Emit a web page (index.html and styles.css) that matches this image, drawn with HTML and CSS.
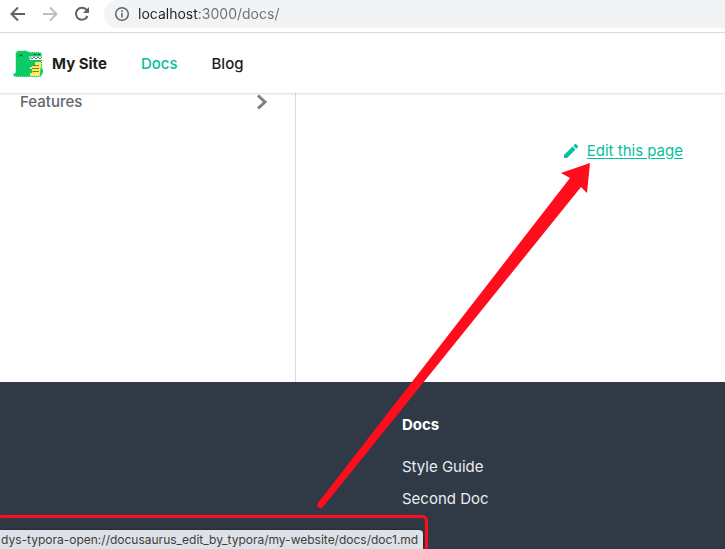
FILE: index.html
```html
<!DOCTYPE html>
<html lang="en">
<head>
<meta charset="utf-8">
<meta name="viewport" content="width=device-width, initial-scale=1">
<title>My Site</title>
<link rel="stylesheet" href="styles.css">
</head>
<body>
<div class="browser">
  <div class="toolbar">
    <button class="tool" type="button" aria-label="Back">
      <svg width="16" height="16" viewBox="0 0 16 16"><path d="M15 8H2M8 1.500L1.500 8L8 14.500"/></svg>
    </button>
    <button class="tool" type="button" aria-label="Forward" disabled>
      <svg width="16" height="16" viewBox="0 0 16 16"><path d="M1 8H14M8 1.500L14.500 8L8 14.500"/></svg>
    </button>
    <button class="tool" type="button" aria-label="Reload">
      <svg width="16" height="16" viewBox="0 0 16 16"><path d="M13.500 10A6 6 0 1 1 12.500 3.800L13.500 5"/><path class="solid" d="M15 1V7H9Z"/></svg>
    </button>
    <div class="address">
      <svg width="16" height="16" viewBox="0 0 16 16" aria-hidden="true"><circle cx="8" cy="8" r="6.300"/><path d="M8 7V11.500M8 4.300V6"/></svg>
      <input class="url" type="text" aria-label="Address" value="localhost:3000/docs/">
    </div>
  </div>

  <header class="navbar">
    <a class="brand" href="#">
      <svg class="logo" width="32" height="32" viewBox="0 0 32 32" aria-hidden="true">
        <path fill="#0ccb66" stroke="#0ccb66" stroke-dasharray="1 1" d="M4 6Q4 3 7 3H14Q17 4 18 4.500H27Q29.500 4.500 29.500 7V26Q29.500 28.500 27 28.500H4Q1.500 28.500 1.500 26Q4 26 4 23Z"/>
        <path fill="#fff" d="M17 8.500H31V12H18Z"/>
        <path fill="none" stroke="#444" stroke-width=".8" d="M18 9L20 11L22 9L24 11L26 9L28 11L30 9"/>
        <path fill="#ffee5a" d="M23 14H29V25Q29 28 26 28H18V24H20V21H18V18H23Z"/>
        <path fill="none" stroke="#655d2f" stroke-width=".8" d="M21 17.500H27M20 20.500H27M21 23.500H27"/>
        <path fill="none" stroke="#174a2c" d="M7 8.500Q9 5 11 8.500M22 6.500H24M26 6.500H28"/>
        <path fill="#0ccb66" d="M16 16H20Q21.500 17.500 20 19H16ZM16 22H20Q21.500 23.500 20 25H16ZM28.500 19.500Q31 20 31 23Q31 27 28 28Z"/>
      </svg>
      <b>My Site</b>
    </a>
    <nav class="links">
      <a class="active" href="#">Docs</a>
      <a href="#">Blog</a>
    </nav>
  </header>

  <div class="main">
    <aside class="sidebar">
      <a class="category" href="#">Features
        <svg width="12" height="16" viewBox="0 0 12 16" aria-hidden="true"><path d="M2 1.500L9 8L2 14.500"/></svg>
      </a>
    </aside>
    <main class="content">
      <a class="edit" href="#">
        <svg width="16" height="16" viewBox="0 0 16 16" aria-hidden="true"><path d="M1 12L9.500 3.500L12.500 6.500L4 15H1ZM10.300 2.700L11.800 1.200Q12.500 .5 13.200 1.200L14.800 2.800Q15.500 3.500 14.800 4.200L13.300 5.700Z"/></svg>
        <span>Edit this page</span>
      </a>
    </main>
  </div>

  <footer class="footer">
    <div class="column">
      <h2>Docs</h2>
      <ul>
        <li><a href="#">Style Guide</a></li>
        <li><a href="#">Second Doc</a></li>
      </ul>
    </div>
  </footer>

  <div class="status">dys-typora-open://docusaurus_edit_by_typora/my-website/docs/doc1.md</div>
  <div class="highlight"></div>
  <svg class="arrow" width="276" height="348" viewBox="0 0 276 348" aria-hidden="true"><path d="M273 2L244 12L253 17L1 342A3 3 0 0 0 6 346L264 26L270 32Z"/></svg>
</div>
</body>
</html>
```
FILE: styles.css
```css
* { box-sizing: border-box; }

body {
  margin: 0;
  font: 15px/24px Inter, "Liberation Sans", sans-serif;
  color: #1c1e21;
  background: #fff;
}

a { color: inherit; text-decoration: none; }

.browser {
  position: relative;
  display: flex;
  flex-direction: column;
  height: 100vh;
  overflow: hidden;
}

.toolbar {
  display: flex;
  align-items: flex-start;
  gap: 16px;
  padding-left: 10px;
  height: 33px;
  flex: none;
  border-bottom: 1px solid #dadce0;
}

.tool {
  display: flex;
  padding: 6px 0;
  border: 0;
  background: none;
  color: #5f6368;
}
.tool:disabled { color: #bcbec0; }
.tool svg, .address svg { fill: none; stroke: currentColor; stroke-width: 2; }
.tool .solid { fill: currentColor; stroke: none; }

.address {
  flex: 1;
  display: flex;
  align-items: center;
  gap: 8px;
  height: 28px;
  padding-left: 10px;
  margin-left: -2px;
  background: #f1f3f4;
  border-radius: 14px 0 0 14px;
  color: #5f6368;
}
.address svg { flex: none; stroke-width: 1.5; }

.url {
  flex: 1;
  min-width: 0;
  padding: 0;
  border: 0;
  outline: 0;
  font: 14px/20px Inter, sans-serif;
  color: transparent;
  background: linear-gradient(90deg, #202124 60px, #6b6f73 60px);
  background-clip: text;
  -webkit-background-clip: text;
}

.navbar {
  position: relative;
  z-index: 1;
  display: flex;
  align-items: center;
  gap: 34px;
  flex: none;
  height: 60px;
  padding: 1px 12px 0;
  background: #fff;
  box-shadow: 0 1px 2px rgba(0, 0, 0, .15);
  font-weight: 500;
}
.brand { display: flex; align-items: center; gap: 8px; }
.brand b { font-weight: 700; }
.links { display: flex; gap: 34px; }
.active { color: #06bf9c; }

.main { display: flex; flex: none; height: 289px; }

.sidebar {
  width: 296px;
  flex: none;
  border-right: 1px solid #dadde1;
}
.category {
  display: flex;
  align-items: center;
  justify-content: space-between;
  margin-top: -4px;
  padding: 1px 27px 0 20px;
  color: #606770;
  font-weight: 500;
}
.category svg { fill: none; stroke: #808080; stroke-width: 3; }

.content { flex: 1; padding: 46px 42px; }
.edit {
  display: flex;
  align-items: center;
  justify-content: flex-end;
  gap: 8px;
  color: #06bf9c;
}
.edit svg { fill: currentColor; }
.edit span { text-decoration: underline; text-underline-offset: 2px; }

.footer {
  flex: 1;
  padding: 31px 20px 0 402px;
  background: #303a46;
  color: #ebedf0;
}
.footer h2 { margin: 0 0 14px; font: inherit; font-weight: 700; color: #fff; }
.footer ul { margin: 0; padding: 0; list-style: none; }
.footer li { line-height: 32px; }

.status {
  position: absolute;
  left: 0;
  bottom: 0;
  padding: 0 5px 0 1px;
  border-radius: 0 4px 0 0;
  background: #dee1e6;
  color: #3c4043;
  font: 12px/19px Inter, sans-serif;
  white-space: nowrap;
  box-shadow: 0 0 3px #16191f;
}

.highlight {
  position: absolute;
  left: -4px;
  bottom: -4px;
  width: 432px;
  height: 38px;
  border: 3px solid #ff0c1d;
  border-radius: 6px;
}

.arrow { position: absolute; left: 317px; top: 161px; fill: #ff0c1d; }
```
